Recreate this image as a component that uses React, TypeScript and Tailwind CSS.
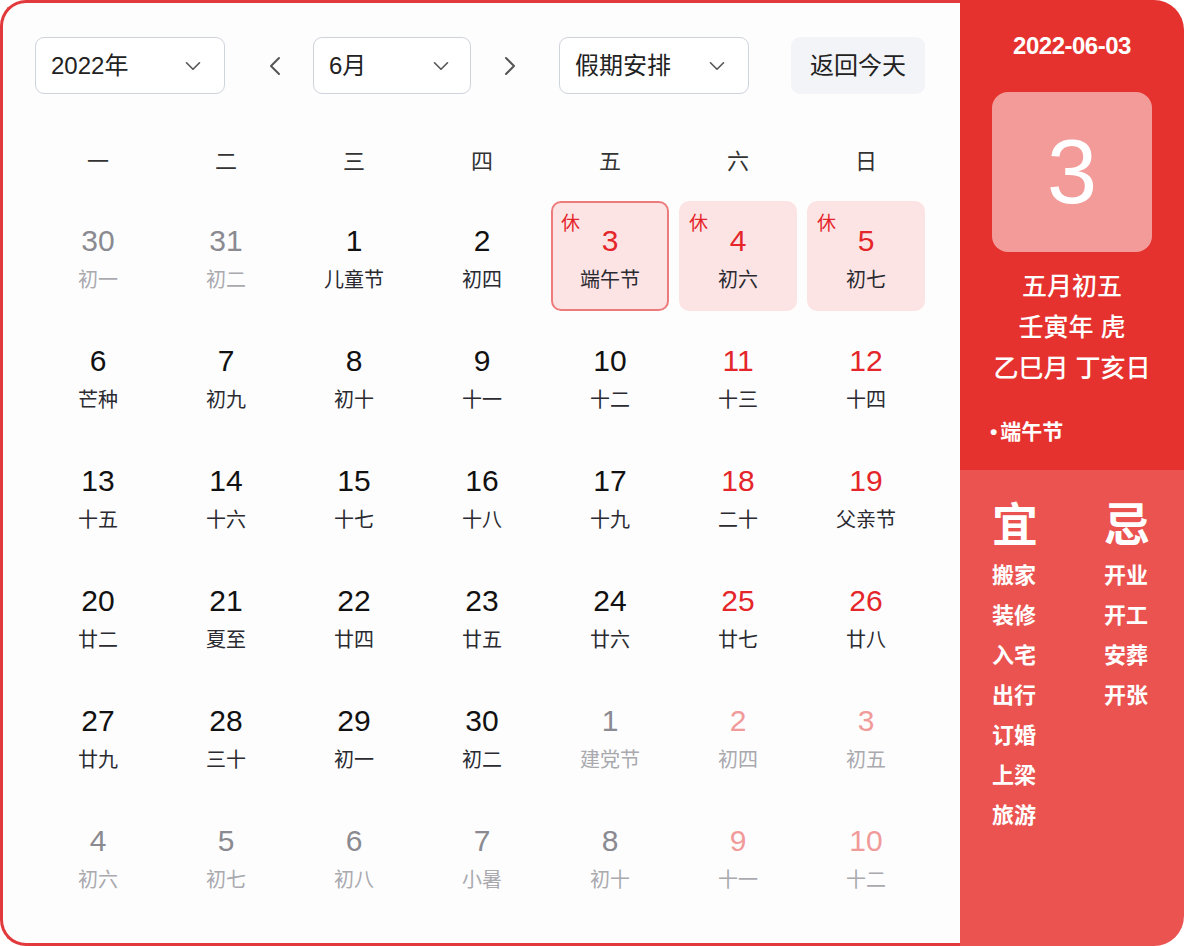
import React from "react";
import { ChevronDown, ChevronLeft, ChevronRight } from "lucide-react";

type Cell = {
  d: string;
  l: string;
  other?: boolean;
  weekend?: boolean;
  rest?: boolean;
  selected?: boolean;
};

const rows: Cell[][] = [
  [
    { d: "30", l: "初一", other: true },
    { d: "31", l: "初二", other: true },
    { d: "1", l: "儿童节" },
    { d: "2", l: "初四" },
    { d: "3", l: "端午节", weekend: true, rest: true, selected: true },
    { d: "4", l: "初六", weekend: true, rest: true },
    { d: "5", l: "初七", weekend: true, rest: true },
  ],
  [
    { d: "6", l: "芒种" },
    { d: "7", l: "初九" },
    { d: "8", l: "初十" },
    { d: "9", l: "十一" },
    { d: "10", l: "十二" },
    { d: "11", l: "十三", weekend: true },
    { d: "12", l: "十四", weekend: true },
  ],
  [
    { d: "13", l: "十五" },
    { d: "14", l: "十六" },
    { d: "15", l: "十七" },
    { d: "16", l: "十八" },
    { d: "17", l: "十九" },
    { d: "18", l: "二十", weekend: true },
    { d: "19", l: "父亲节", weekend: true },
  ],
  [
    { d: "20", l: "廿二" },
    { d: "21", l: "夏至" },
    { d: "22", l: "廿四" },
    { d: "23", l: "廿五" },
    { d: "24", l: "廿六" },
    { d: "25", l: "廿七", weekend: true },
    { d: "26", l: "廿八", weekend: true },
  ],
  [
    { d: "27", l: "廿九" },
    { d: "28", l: "三十" },
    { d: "29", l: "初一" },
    { d: "30", l: "初二" },
    { d: "1", l: "建党节", other: true },
    { d: "2", l: "初四", other: true, weekend: true },
    { d: "3", l: "初五", other: true, weekend: true },
  ],
  [
    { d: "4", l: "初六", other: true },
    { d: "5", l: "初七", other: true },
    { d: "6", l: "初八", other: true },
    { d: "7", l: "小暑", other: true },
    { d: "8", l: "初十", other: true },
    { d: "9", l: "十一", other: true, weekend: true },
    { d: "10", l: "十二", other: true, weekend: true },
  ],
];

const weekdays = ["一", "二", "三", "四", "五", "六", "日"];
const yi = ["搬家", "装修", "入宅", "出行", "订婚", "上梁", "旅游"];
const ji = ["开业", "开工", "安葬", "开张"];

function DayCell({ c }: { c: Cell }) {
  let numCls = "text-[#111] font-medium";
  if (c.other && c.weekend) numCls = "text-[#f19a9a] font-normal";
  else if (c.other) numCls = "text-[#8a8a90] font-normal";
  else if (c.weekend) numCls = "text-[#e4262a] font-normal";
  const lunarCls = c.other ? "text-[#a9a9ae]" : "text-[#2a2a30]";
  let box = "border-2 border-transparent";
  if (c.rest) box = "bg-[#fde4e4] border-2 border-[#fde4e4]";
  if (c.selected) box = "bg-[#fde4e4] border-2 border-[#ee7b7b]";
  return (
    <div className={`relative h-[110px] rounded-[10px] flex flex-col items-center ${box}`}>
      {c.rest && (
        <span className="absolute left-[8px] top-[9px] text-[19px] leading-[24px] text-[#e4262a]">休</span>
      )}
      <span className={`mt-[20px] text-[30px] leading-[36px] ${numCls}`}>{c.d}</span>
      <span className={`mt-[8px] text-[20px] leading-[26px] ${lunarCls}`}>{c.l}</span>
    </div>
  );
}

export default function App() {
  return (
    <div
      className="w-[1184px] h-[946px] bg-white flex"
      style={{ fontFamily: '"Liberation Sans", "Noto Sans CJK SC", sans-serif' }}
    >
      {/* Left calendar */}
      <div className="w-[960px] h-[946px] border-[3px] border-r-0 border-[#e23a3c] rounded-l-[26px] bg-[#fdfdfe] pl-[31px] pr-[30px] pt-[34px]">
        {/* Header */}
        <div className="flex items-center h-[57px]">
          <div className="w-[190px] h-[57px] ml-[1px] rounded-[9px] border border-[#cfd3dc] bg-white flex items-center justify-between pl-[15px] pr-[18px]">
            <span className="text-[24px] text-[#222]">2022年</span>
            <ChevronDown size={26} strokeWidth={1.5} className="text-[#555]" />
          </div>
          <ChevronLeft size={32} strokeWidth={1.5} className="ml-[34px] text-[#555]" />
          <div className="ml-[22px] w-[158px] h-[57px] rounded-[9px] border border-[#cfd3dc] bg-white flex items-center justify-between pl-[15px] pr-[16px]">
            <span className="text-[24px] text-[#222]">6月</span>
            <ChevronDown size={26} strokeWidth={1.5} className="text-[#555]" />
          </div>
          <ChevronRight size={32} strokeWidth={1.5} className="ml-[23px] text-[#555]" />
          <div className="ml-[33px] w-[190px] h-[57px] rounded-[9px] border border-[#cfd3dc] bg-white flex items-center justify-between pl-[15px] pr-[18px]">
            <span className="text-[24px] text-[#222]">假期安排</span>
            <ChevronDown size={26} strokeWidth={1.5} className="text-[#555]" />
          </div>
          <div className="ml-[42px] w-[134px] h-[57px] rounded-[9px] bg-[#f3f4f7] flex items-center justify-center">
            <span className="text-[24px] text-[#222]">返回今天</span>
          </div>
        </div>

        {/* Weekdays */}
        <div className="grid grid-cols-7 mt-[47px] h-[40px] items-center">
          {weekdays.map((w) => (
            <div key={w} className="text-center text-[22px] text-[#333]">
              {w}
            </div>
          ))}
        </div>

        {/* Days */}
        <div className="mt-[20px] flex flex-col gap-[10px]">
          {rows.map((r, i) => (
            <div key={i} className="grid grid-cols-7 gap-[10px] px-[5px]">
              {r.map((c, j) => (
                <DayCell key={j} c={c} />
              ))}
            </div>
          ))}
        </div>
      </div>

      {/* Right panel */}
      <div className="w-[224px] h-[946px] rounded-r-[30px] overflow-hidden flex flex-col">
        <div className="h-[470px] bg-[#e6322f] flex flex-col items-center text-white">
          <div className="mt-[30px] text-[24px] leading-[32px] font-bold tracking-[-0.5px]">2022-06-03</div>
          <div className="mt-[30px] w-[160px] h-[160px] rounded-[16px] bg-[#f29b99] flex items-center justify-center">
            <span className="text-[90px] leading-none">3</span>
          </div>
          <div className="mt-[14px] text-[25px] leading-[41px] font-medium">五月初五</div>
          <div className="text-[25px] leading-[41px] font-medium">壬寅年 虎</div>
          <div className="text-[25px] leading-[41px] font-medium">乙巳月 丁亥日</div>
          <div className="self-start ml-[30px] mt-[29px] text-[21px] leading-[28px] font-bold">
            <span className="mr-[3px]">•</span>端午节
          </div>
        </div>
        <div className="flex-1 bg-[#ea5350] flex pl-[32px] pt-[30px] text-white">
          <div className="w-[112px] flex flex-col">
            <div className="text-[46px] leading-[50px] font-bold mb-[6px]">宜</div>
            {yi.map((t) => (
              <div key={t} className="text-[22px] leading-[40px] font-bold">
                {t}
              </div>
            ))}
          </div>
          <div className="flex flex-col">
            <div className="text-[46px] leading-[50px] font-bold mb-[6px]">忌</div>
            {ji.map((t) => (
              <div key={t} className="text-[22px] leading-[40px] font-bold">
                {t}
              </div>
            ))}
          </div>
        </div>
      </div>
    </div>
  );
}
